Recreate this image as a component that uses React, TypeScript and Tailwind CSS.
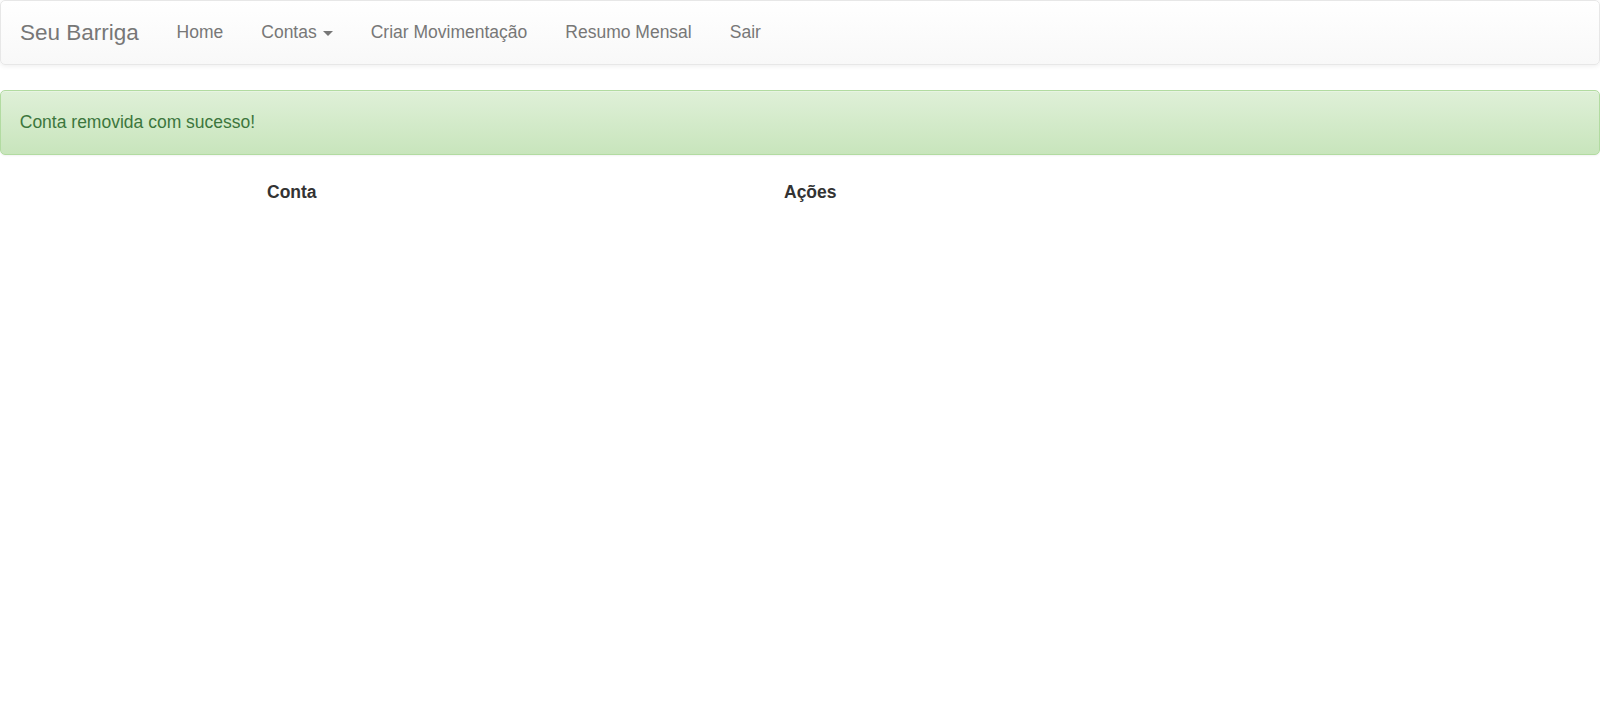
import React from "react";

const links = ["Home", "Contas", "Criar Movimentação", "Resumo Mensal", "Sair"];

export default function App() {
  return (
    <main className="min-h-screen bg-white font-['Liberation_Sans',Arial,sans-serif] text-[17.5px] leading-[25px] text-[#333]">
      {/* Navbar */}
      <nav className="flex h-[65px] items-stretch rounded-[5px] border border-[#e7e7e7] bg-gradient-to-b from-white to-[#f8f8f8] shadow-[0_1px_5px_rgba(0,0,0,0.075)]">
        <a className="flex items-center pl-[19px] pr-[18.75px] text-[22.5px] text-[#777]">
          Seu Barriga
        </a>
        <ul className="flex items-stretch">
          {links.map((l) => (
            <li key={l} className="flex items-center px-[19px] text-[#777]">
              {l}
              {l === "Contas" && (
                <span className="ml-[6px] mt-[1px] inline-block h-0 w-0 border-x-[5px] border-t-[5px] border-x-transparent border-t-[#777]"></span>
              )}
            </li>
          ))}
        </ul>
      </nav>

      {/* Alert */}
      <div className="mt-[25px] rounded-[5px] border border-[#b2dba1] bg-gradient-to-b from-[#dff0d8] to-[#c8e5bc] px-[18.75px] py-[18.75px] text-[#3c763d] shadow-[inset_0_1px_0_rgba(255,255,255,0.25),0_1px_2px_rgba(0,0,0,0.05)]">
        Conta removida com sucesso!
      </div>

      {/* Tabela */}
      <table className="mx-auto mt-[15px] w-[1086px]">
        <thead>
          <tr>
            <th className="w-[517px] px-[10px] py-[10px] text-left font-bold">Conta</th>
            <th className="px-[10px] py-[10px] text-left font-bold">Ações</th>
          </tr>
        </thead>
        <tbody></tbody>
      </table>
    </main>
  );
}
